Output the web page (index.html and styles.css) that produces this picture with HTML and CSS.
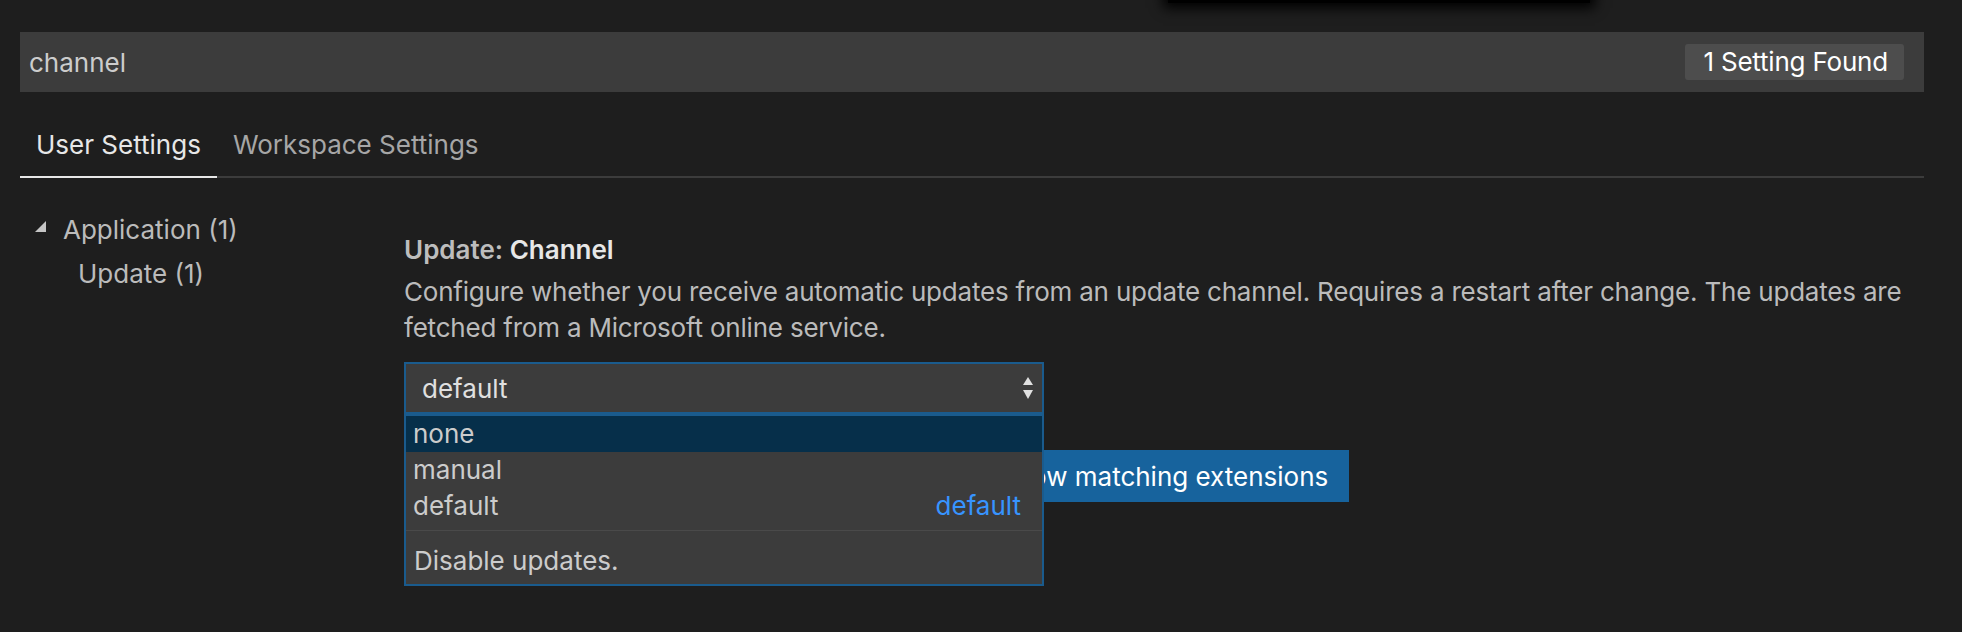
FILE: index.html
```html
<!DOCTYPE html>
<html lang="en">
<head>
	<meta charset="UTF-8">
	<title>Settings</title>
	<link rel="stylesheet" href="styles.css">
</head>
<body>
	<div class="top-shadow"></div>

	<div class="settings">
		<div class="search">
			<span class="search-text">channel</span>
			<span class="count-badge">1 Setting Found</span>
		</div>

		<div class="tabs">
			<div class="tab active">User Settings</div>
			<div class="tab">Workspace Settings</div>
		</div>

		<div class="settings-body">
			<div class="toc">
				<div class="toc-row">
					<span class="twistie"></span>
					<span>Application (1)</span>
				</div>
				<div class="toc-row child">Update (1)</div>
			</div>

			<div class="setting">
				<div class="setting-title"><span class="category">Update: </span>Channel</div>
				<div class="setting-desc">Configure whether you receive automatic updates from an update channel. Requires a restart after change. The updates are fetched from a Microsoft online service.</div>

				<div class="select-wrap">
					<div class="select">
						<span>default</span>
						<span class="arrows">
							<svg width="12" height="24" viewBox="0 0 12 24">
								<polygon points="6,1 11,9 1,9" fill="#e0e0e0"/>
								<polygon points="1,14 11,14 6,23" fill="#e0e0e0"/>
							</svg>
						</span>
					</div>

					<div class="dropdown">
						<div class="option selected">none</div>
						<div class="option">manual</div>
						<div class="option"><span>default</span><span class="option-default">default</span></div>
						<div class="option-desc">Disable updates.</div>
					</div>
				</div>

				<button class="ext-button">Show matching extensions</button>
			</div>
		</div>
	</div>
</body>
</html>
```

FILE: styles.css
```css
html, body{
	height: 100%;
}

body{
	margin: 0;
	background: #1e1e1e;
	color: #cccccc;
	font-family: Inter, "Noto Sans", sans-serif;
	font-size: 26px;
	overflow: hidden;
	position: relative;
}

.top-shadow{
	position: absolute;
	left: 1168px;
	top: -30px;
	width: 422px;
	height: 33px;
	background: #000;
	box-shadow: 0 0 12px 5px #000;
}

.settings{
	padding: 32px 38px 0 20px;
}

/* search box */
.search{
	height: 60px;
	background: #3c3c3c;
	display: flex;
	align-items: center;
	justify-content: space-between;
	padding: 0 20px 0 9px;
}

.search-text{
	color: #cccccc;
}

.count-badge{
	background: #4d4d4d;
	color: #ffffff;
	font-size: 26px;
	letter-spacing: -0.2px;
	height: 36px;
	line-height: 36px;
	padding: 0 16px 0 18px;
	border-radius: 3px;
}

/* tabs */
.tabs{
	display: flex;
	margin-top: 35px;
	border-bottom: 2px solid #3c3c3c;
}

.tab{
	padding: 0 16px 13px;
	line-height: 36px;
	color: #a6a6a6;
	margin-bottom: -2px;
	border-bottom: 2px solid transparent;
}

.tab.active{
	color: #e7e7e7;
	border-bottom-color: #e7e7e7;
}

.settings-body{
	display: flex;
}

/* table of contents */
.toc{
	width: 384px;
	padding-top: 30px;
	color: #bbbbbb;
}

.toc-row{
	height: 44px;
	line-height: 44px;
	display: flex;
	align-items: center;
	padding-left: 15px;
}

.toc-row.child{
	padding-left: 58px;
}

.twistie{
	width: 0;
	height: 0;
	border-left: 11px solid transparent;
	border-bottom: 11px solid #c5c5c5;
	margin: 0 17px 7px 0;
}

/* setting item */
.setting{
	flex: 1;
	padding-top: 54px;
}

.setting-title{
	line-height: 36px;
	font-weight: 600;
	color: #e7e7e7;
}

.setting-title .category{
	color: #bdbdbd;
}

.setting-desc{
	margin-top: 6px;
	line-height: 36px;
	color: #bbbbbb;
	letter-spacing: -0.2px;
	width: 1520px;
}

.select-wrap{
	position: relative;
	width: 640px;
	margin-top: 16px;
}

.select{
	box-sizing: border-box;
	height: 52px;
	border: 2px solid #1a5b8d;
	background: #3c3c3c;
	color: #e0e0e0;
	display: flex;
	align-items: center;
	justify-content: space-between;
	padding: 0 8px 0 16px;
}

.arrows svg{
	display: block;
}

.dropdown{
	position: absolute;
	left: 0;
	top: 52px;
	width: 640px;
	box-sizing: border-box;
	border: 2px solid #1a5b8d;
	background: #3c3c3c;
	z-index: 2;
}

.option{
	height: 36px;
	line-height: 36px;
	padding: 0 21px 0 7px;
	display: flex;
	justify-content: space-between;
	color: #cccccc;
}

.option.selected{
	background: #062f4a;
}

.option-default{
	color: #3794ff;
}

.option-desc{
	margin-top: 6px;
	border-top: 1px solid #4a4a4a;
	padding: 12px 8px 5px;
	line-height: 36px;
	color: #cccccc;
}

.ext-button{
	margin: 36px 0 0 574px;
	height: 52px;
	padding: 0 21px;
	border: none;
	background: #17639d;
	color: #ffffff;
	font-family: inherit;
	font-size: 26px;
}
```
